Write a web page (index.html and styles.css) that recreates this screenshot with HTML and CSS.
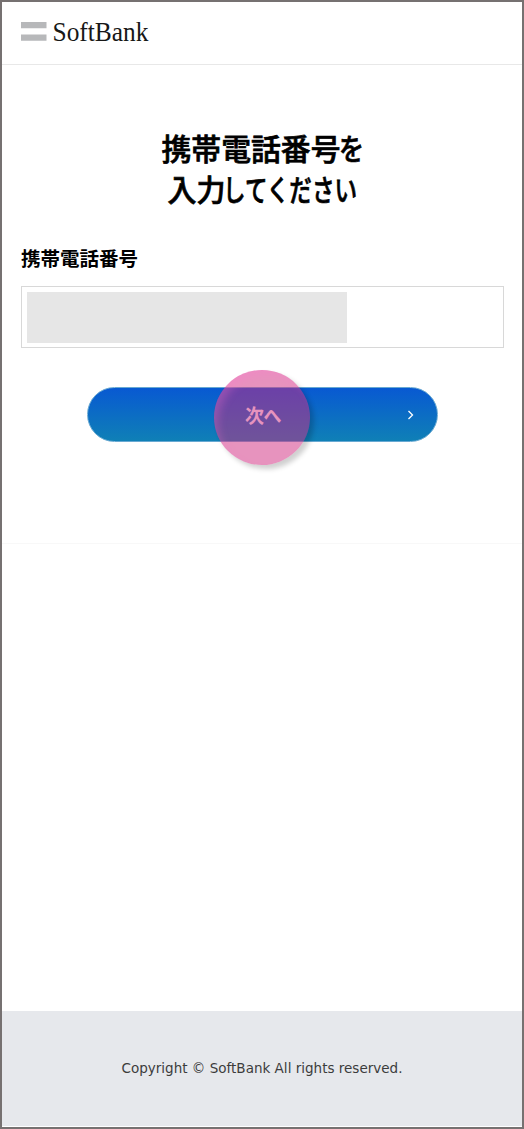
FILE: index.html
```html
<!DOCTYPE html>
<html lang="ja">
<head>
<meta charset="utf-8">
<title>携帯電話番号の入力</title>
<link rel="stylesheet" href="styles.css">
</head>
<body>
<div class="page">
  <header class="header">
    <svg class="logo" width="130" height="36" viewBox="0 0 130 36" aria-label="SoftBank">
      <path fill="#b7b8ba" d="M0 4h25.500v6.300H0zM0 16.500h25.500v6.300H0z"/>
      <text class="logo-text" x="31.500" y="22.700" textLength="96" lengthAdjust="spacingAndGlyphs">SoftBank</text>
    </svg>
  </header>
  <main class="main">
    <h1 class="title">
      <svg width="240" height="84" viewBox="-10 0 240 84">
        <text x="9.500" y="30.500" textLength="179" lengthAdjust="spacingAndGlyphs">携帯電話番号</text>
        <text x="187" y="30.500" textLength="25" lengthAdjust="spacingAndGlyphs">を</text>
        <text x="15.500" y="72" textLength="58" lengthAdjust="spacingAndGlyphs">入力</text>
        <text x="71" y="72" textLength="134" lengthAdjust="spacingAndGlyphs">してください</text>
      </svg>
    </h1>
    <label class="label">携帯電話番号</label>
    <div class="field"><div class="mask"></div></div>
    <div class="button">
      <svg class="next" width="52" height="36" viewBox="-4 -4 52 36">
        <text x="5" y="21.500" textLength="19" lengthAdjust="spacingAndGlyphs">次</text>
        <text x="23.500" y="21.500" textLength="18" lengthAdjust="spacingAndGlyphs">へ</text>
      </svg>
      <svg class="chevron" width="8" height="10" viewBox="0 0 8 10"><path d="M1.500 1l4 4-4 4"/></svg>
      <span class="tap"></span>
    </div>
  </main>
  <footer class="footer">
    <svg width="284" height="26" viewBox="0 0 284 26">
      <text class="copy" x="1.500" y="16" textLength="281" lengthAdjust="spacingAndGlyphs">Copyright © SoftBank All rights reserved.</text>
    </svg>
  </footer>
</div>
</body>
</html>
```
FILE: styles.css
```css
* { box-sizing: border-box; }
body { margin: 0; background: #fff; font-family: "Noto Sans CJK JP", sans-serif; }
svg { display: block; overflow: visible; }
.page {
  height: 1129px;
  border: 2px solid #767171;
  display: flex;
  flex-direction: column;
}
.header {
  height: 63px;
  flex: none;
  padding: 16px 19px 0;
  border-bottom: 1px solid #e8e8e8;
}
.logo-text { font: 27.5px "Liberation Serif", serif; fill: #171717; }
.main {
  height: 479px;
  flex: none;
  padding: 64px 19px 0;
  border-bottom: 1px solid #f8f8f8;
}
.title { margin: 0; display: flex; justify-content: center; }
.title text {
  font: 500 29.5px "Noto Sans CJK JP", sans-serif;
  fill: #000;
  stroke: #000;
  stroke-width: .7px;
}
.label {
  display: block;
  margin-top: 32px;
  height: 26px;
  line-height: 26px;
  font-size: 19.5px;
  font-weight: bold;
  color: #000;
}
.field {
  margin-top: 15px;
  height: 62px;
  width: 483px;
  border: 1px solid #d8d8d8;
  padding: 5px;
}
.mask { width: 320px; height: 51px; background: #e6e6e6; }
.button {
  position: relative;
  margin: 39px auto 0;
  width: 351px;
  height: 55px;
  border: 1px solid #68a9d2;
  border-radius: 28px;
  background: linear-gradient(#0859d2, #0f80b6);
  display: flex;
  align-items: center;
  justify-content: center;
}
.next text { font: bold 19px "Noto Sans CJK JP", sans-serif; fill: #fff; }
.chevron { position: absolute; right: 22px; top: 22px; }
.chevron path { fill: none; stroke: #fff; stroke-width: 1.3; }
.tap {
  position: absolute;
  left: 126px;
  top: -18px;
  width: 96px;
  height: 95px;
  border-radius: 50%;
  background: rgba(208, 40, 126, .5);
  box-shadow: 4px 4px 5px rgba(0, 0, 0, .19), inset 6px 6px 8px -2px rgba(255, 120, 210, .28);
}
.footer {
  margin-top: auto;
  height: 116px;
  flex: none;
  background: #e6e8ec;
  border-bottom: 1px solid #fff;
  padding-top: 46px;
  display: flex;
  justify-content: center;
}
.copy { font: 14.3px "DejaVu Sans", Verdana, sans-serif; fill: #3c3c3c; }
```
